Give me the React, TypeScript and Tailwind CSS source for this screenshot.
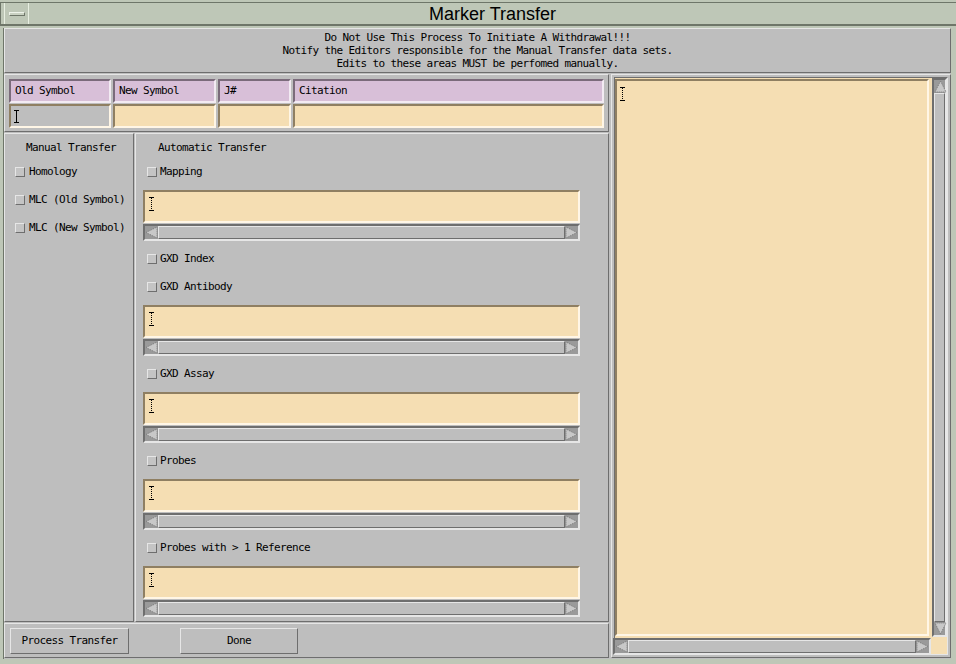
import React from "react";

const MONO = "font-['DejaVu_Sans_Mono','Liberation_Mono',monospace] text-[11px] tracking-[-0.62px] text-black";
const RAISED = "border border-t-[#e6e6e6] border-l-[#e6e6e6] border-b-[#6e6e6e] border-r-[#6e6e6e]";
const SUNKEN = "border border-t-[#6e6e6e] border-l-[#6e6e6e] border-b-[#e6e6e6] border-r-[#e6e6e6]";
const WHEAT_IN = "bg-[#f5deb3] border-2 border-t-[#8f7f62] border-l-[#8f7f62] border-b-[#fff6e6] border-r-[#fff6e6]";

function Beam() {
  return (
    <svg width="5" height="14" viewBox="0 0 5 14" className="block">
      <path d="M0 0.5h5M0 13.5h5" stroke="#000" strokeWidth="1" />
      <path d="M2.5 1v12" stroke="#000" strokeWidth="1" strokeDasharray="1 1" />
    </svg>
  );
}

function Arrow({ dir }: { dir: "left" | "right" | "up" | "down" }) {
  const pts = {
    left: "1,6.5 12,1 12,12",
    right: "12,6.5 1,1 1,12",
    up: "6.5,1 12,12 1,12",
    down: "6.5,12 1,1 12,1",
  }[dir];
  return (
    <svg width="13" height="13" viewBox="0 0 13 13" className="block shrink-0">
      <polygon points={pts} fill="#c8c8c8" stroke="#7a7a7a" strokeWidth="1" strokeDasharray="1 1" />
    </svg>
  );
}

function HScroll() {
  return (
    <div className="flex h-[17px] items-center border-2 border-t-[#6e6e6e] border-l-[#6e6e6e] border-b-[#e6e6e6] border-r-[#e6e6e6] bg-[#9a9a9a]">
      <Arrow dir="left" />
      <div className={`flex-1 h-full bg-[#bebebe] ${RAISED}`} />
      <Arrow dir="right" />
    </div>
  );
}

function Check({ label, className, tight }: { label: string; className?: string; tight?: boolean }) {
  return (
    <div className={`flex h-[14px] items-center ${className ?? ""}`}>
      <span className={`w-[10px] h-[10px] shrink-0 bg-[#c4c4c4] ${RAISED}`} />
      <span className={`${tight ? "ml-[3px]" : "ml-[4px]"} leading-[14px] whitespace-pre`}>{label}</span>
    </div>
  );
}

function Field() {
  return (
    <div className="mt-[11px] w-[437px]">
      <div className={`h-[33px] pl-[4px] pt-[5px] ${WHEAT_IN}`}>
        <Beam />
      </div>
      <div className="mt-[1px]">
        <HScroll />
      </div>
    </div>
  );
}

function Button({ label, w }: { label: string; w: string }) {
  return (
    <div className={`${w} h-[26px] flex items-center justify-center bg-[#bebebe] ${RAISED}`}>
      {label}
    </div>
  );
}

export default function App() {
  return (
    <div className={`w-[956px] h-[664px] bg-[#bec7b7] overflow-hidden ${MONO}`}>
      {/* window title bar */}
      <div className="h-[28px] pt-[2px]">
        <div className="h-[24px] flex border-t border-b-2 border-t-[#6e7669] border-b-[#6e7669] border-l border-l-[#6e7669]">
          <div className="w-[25px] ml-[3px] flex items-center justify-center border-l border-r border-l-[#e8efe2] border-r-[#e8efe2]">
            <div className="w-[16px] h-[4px] bg-[#c9d1c2] border border-t-[#eef3ea] border-l-[#eef3ea] border-b-[#6e7669] border-r-[#6e7669]" />
          </div>
          <div className="flex-1 flex items-center justify-center pt-[1px] font-['Liberation_Sans',Arial,sans-serif] text-[18px] tracking-normal text-black">
            Marker Transfer
          </div>
        </div>
      </div>

      {/* client area */}
      <div className="ml-[3px] mr-[5px] h-[631px] w-[948px] bg-[#bebebe] border-l border-l-[#6e7669]">
        {/* warning message */}
        <div className={`h-[45px] pt-[2px] flex flex-col items-center leading-[13px] ${RAISED}`}>
          <div>Do Not Use This Process To Initiate A Withdrawal!!!</div>
          <div>Notify the Editors responsible for the Manual Transfer data sets.</div>
          <div>Edits to these areas MUST be perfomed manually.</div>
        </div>

        <div className="flex gap-[2px]">
          {/* left column */}
          <div className="w-[605px] flex flex-col">
            {/* symbol table */}
            <div className={`mt-[1px] h-[58px] pl-[4px] pt-[4px] ${RAISED}`}>
              <div className="grid grid-cols-[102px_103px_73px_311px] grid-rows-[24px_24px] gap-x-[2px] gap-y-[1px]">
                {["Old Symbol", "New Symbol", "J#", "Citation"].map((h) => (
                  <div
                    key={h}
                    className="bg-[#d8bfd8] border-2 border-t-[#7b6b7b] border-l-[#7b6b7b] border-b-[#f3ebf3] border-r-[#f3ebf3] pl-[4px] flex items-center"
                  >
                    {h}
                  </div>
                ))}
                <div className="bg-[#bebebe] border-2 border-t-[#8f7f62] border-l-[#8f7f62] border-b-[#fff6e6] border-r-[#fff6e6] pl-[3px] flex items-center">
                  <svg width="5" height="13" viewBox="0 0 5 13" className="block">
                    <path d="M0 0.5h5M0 12.5h5M2.5 0.5v12" stroke="#000" strokeWidth="1" />
                  </svg>
                </div>
                <div className={WHEAT_IN} />
                <div className={WHEAT_IN} />
                <div className={WHEAT_IN} />
              </div>
            </div>

            {/* transfer panels */}
            <div className="mt-[1px] h-[489px] flex gap-[1px]">
              <div className={`w-[130px] ${RAISED}`}>
                <div className="mt-[7px] ml-[21px] h-[14px] leading-[14px] whitespace-pre">Manual Transfer</div>
                <Check label="Homology" className="mt-[10px] ml-[10px]" />
                <Check label="MLC (Old Symbol)" className="mt-[14px] ml-[10px]" />
                <Check label="MLC (New Symbol)" className="mt-[14px] ml-[10px]" />
              </div>

              <div className={`flex-1 pl-[7px] ${RAISED}`}>
                <div className="mt-[7px] ml-[15px] h-[14px] leading-[14px] whitespace-pre">Automatic Transfer</div>
                <Check tight label="Mapping" className="mt-[10px] ml-[4px]" />
                <Field />
                <Check tight label="GXD Index" className="mt-[11px] ml-[4px]" />
                <Check tight label="GXD Antibody" className="mt-[14px] ml-[4px]" />
                <Field />
                <Check tight label="GXD Assay" className="mt-[11px] ml-[4px]" />
                <Field />
                <Check tight label="Probes" className="mt-[11px] ml-[4px]" />
                <Field />
                <Check tight label="Probes with > 1 Reference" className="mt-[11px] ml-[4px]" />
                <Field />
              </div>
            </div>

            {/* buttons */}
            <div className={`mt-[1px] h-[35px] pl-[5px] pt-[4px] flex ${RAISED}`}>
              <Button label="Process Transfer" w="w-[119px]" />
              <div className="w-[51px]" />
              <Button label="Done" w="w-[118px]" />
            </div>
          </div>

          {/* right column: notes text */}
          <div className={`mt-[1px] w-[340px] h-[584px] p-[2px] flex ${RAISED}`}>
            <div className={`flex-1 grid grid-cols-[1fr_15px] grid-rows-[1fr_16px] bg-[#f5deb3] ${SUNKEN}`}>
              <div className="pr-[3px] pb-[2px] pt-[1px]">
                <div className={`h-full pl-[3px] pt-[6px] ${WHEAT_IN}`}>
                  <Beam />
                </div>
              </div>
              <div className="flex flex-col mb-[1px] border-2 border-t-[#6e6e6e] border-l-[#6e6e6e] border-b-[#e6e6e6] border-r-[#e6e6e6] bg-[#9a9a9a]">
                <Arrow dir="up" />
                <div className={`flex-1 bg-[#bebebe] ${RAISED}`} />
                <Arrow dir="down" />
              </div>
              <div className="-ml-[2px] mr-[1px]">
                <HScroll />
              </div>
              <div />
            </div>
          </div>
        </div>
      </div>
    </div>
  );
}
